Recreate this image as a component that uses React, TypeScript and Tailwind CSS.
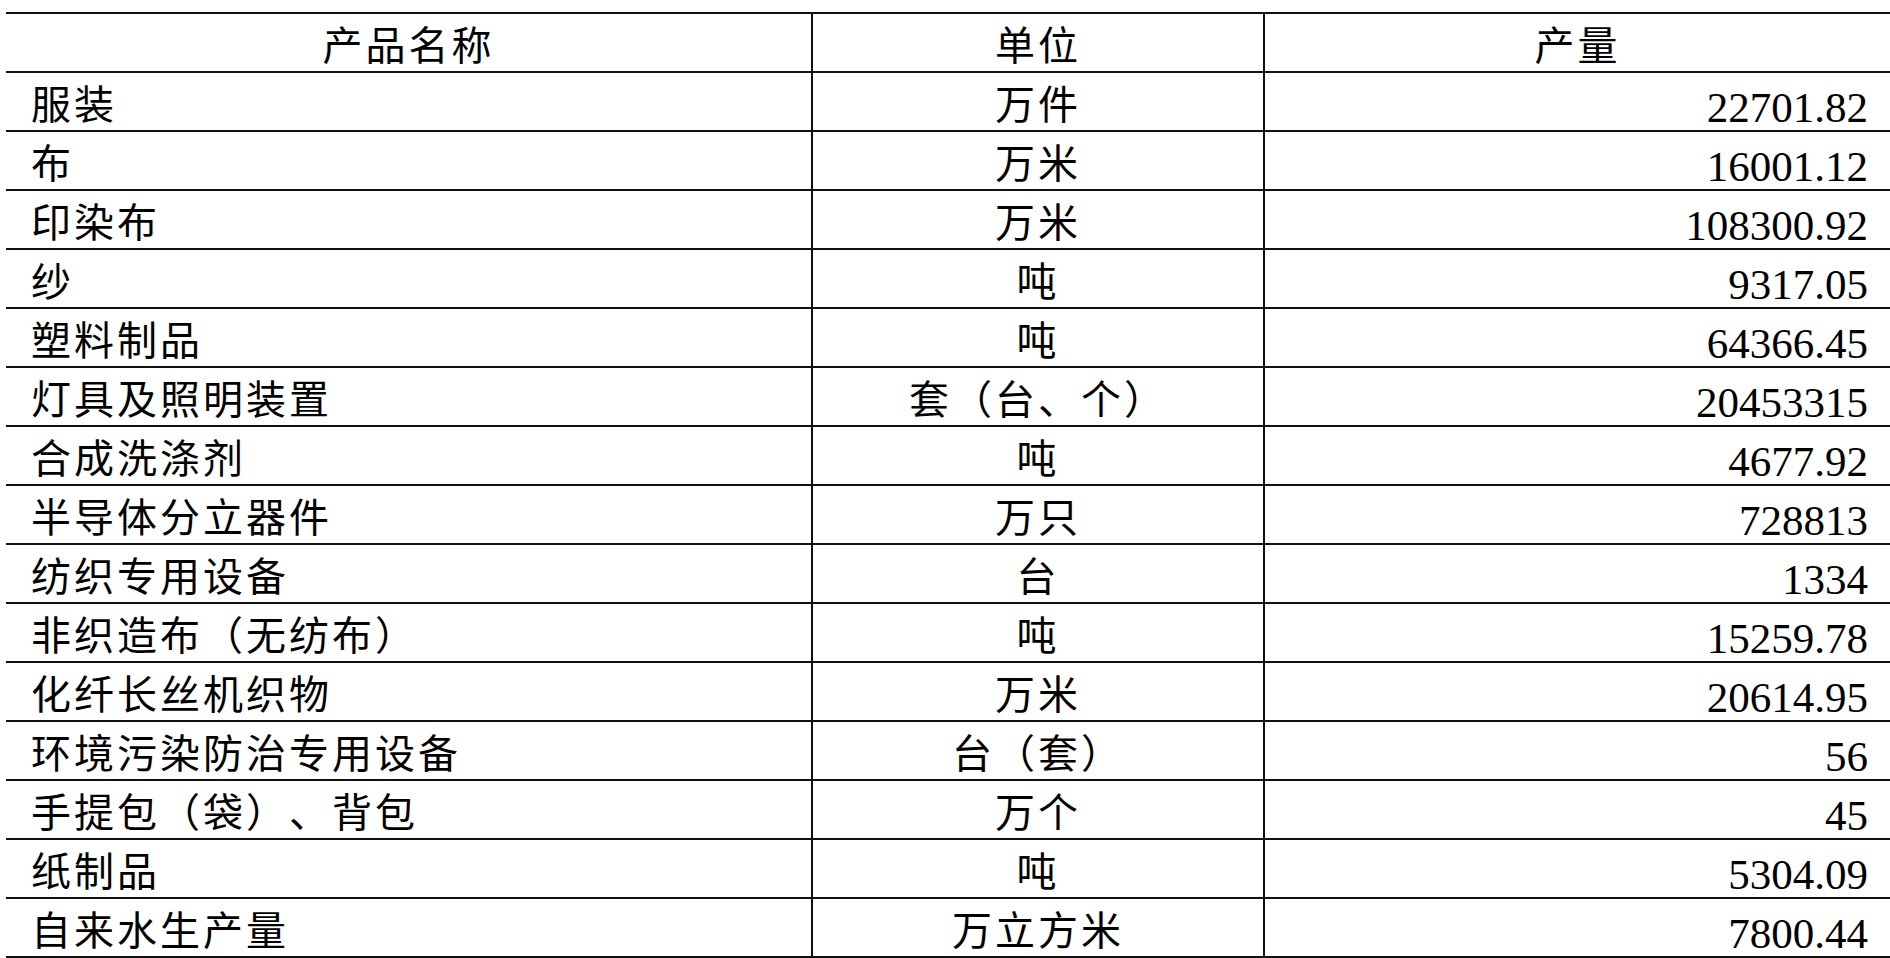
import React from "react";

const rows: [string, string, string][] = [
  ["服装", "万件", "22701.82"],
  ["布", "万米", "16001.12"],
  ["印染布", "万米", "108300.92"],
  ["纱", "吨", "9317.05"],
  ["塑料制品", "吨", "64366.45"],
  ["灯具及照明装置", "套（台、个）", "20453315"],
  ["合成洗涤剂", "吨", "4677.92"],
  ["半导体分立器件", "万只", "728813"],
  ["纺织专用设备", "台", "1334"],
  ["非织造布（无纺布）", "吨", "15259.78"],
  ["化纤长丝机织物", "万米", "20614.95"],
  ["环境污染防治专用设备", "台（套）", "56"],
  ["手提包（袋）、背包", "万个", "45"],
  ["纸制品", "吨", "5304.09"],
  ["自来水生产量", "万立方米", "7800.44"],
];

const rowCls =
  "grid grid-cols-[807px_452px_625px] h-[59px] border-b-2 border-[#111]";
const cjk = "flex items-center leading-none whitespace-nowrap text-[40px] tracking-[3px]";
const num =
  "flex items-center justify-end pt-[12px] pr-[22px] leading-none whitespace-nowrap font-['Liberation_Serif',serif] text-[43px]";

export default function App() {
  return (
    <div className="w-[1890px] h-[958px] bg-white overflow-hidden font-['Noto_Sans_CJK_SC',sans-serif] text-black [text-spacing-trim:space-all]">
      <div className="ml-[6px] mt-[12px] border-t-2 border-[#111]">
        <div className={rowCls}>
          <div className={`${cjk} justify-center border-r-2 border-[#111]`}>产品名称</div>
          <div className={`${cjk} justify-center border-r-2 border-[#111]`}>单位</div>
          <div className={`${cjk} justify-center`}>产量</div>
        </div>
        {rows.map(([name, unit, value]) => (
          <div key={name} className={rowCls}>
            <div className={`${cjk} justify-start pl-[25px] border-r-2 border-[#111]`}>{name}</div>
            <div className={`${cjk} justify-center border-r-2 border-[#111]`}>{unit}</div>
            <div className={num}>{value}</div>
          </div>
        ))}
      </div>
    </div>
  );
}
